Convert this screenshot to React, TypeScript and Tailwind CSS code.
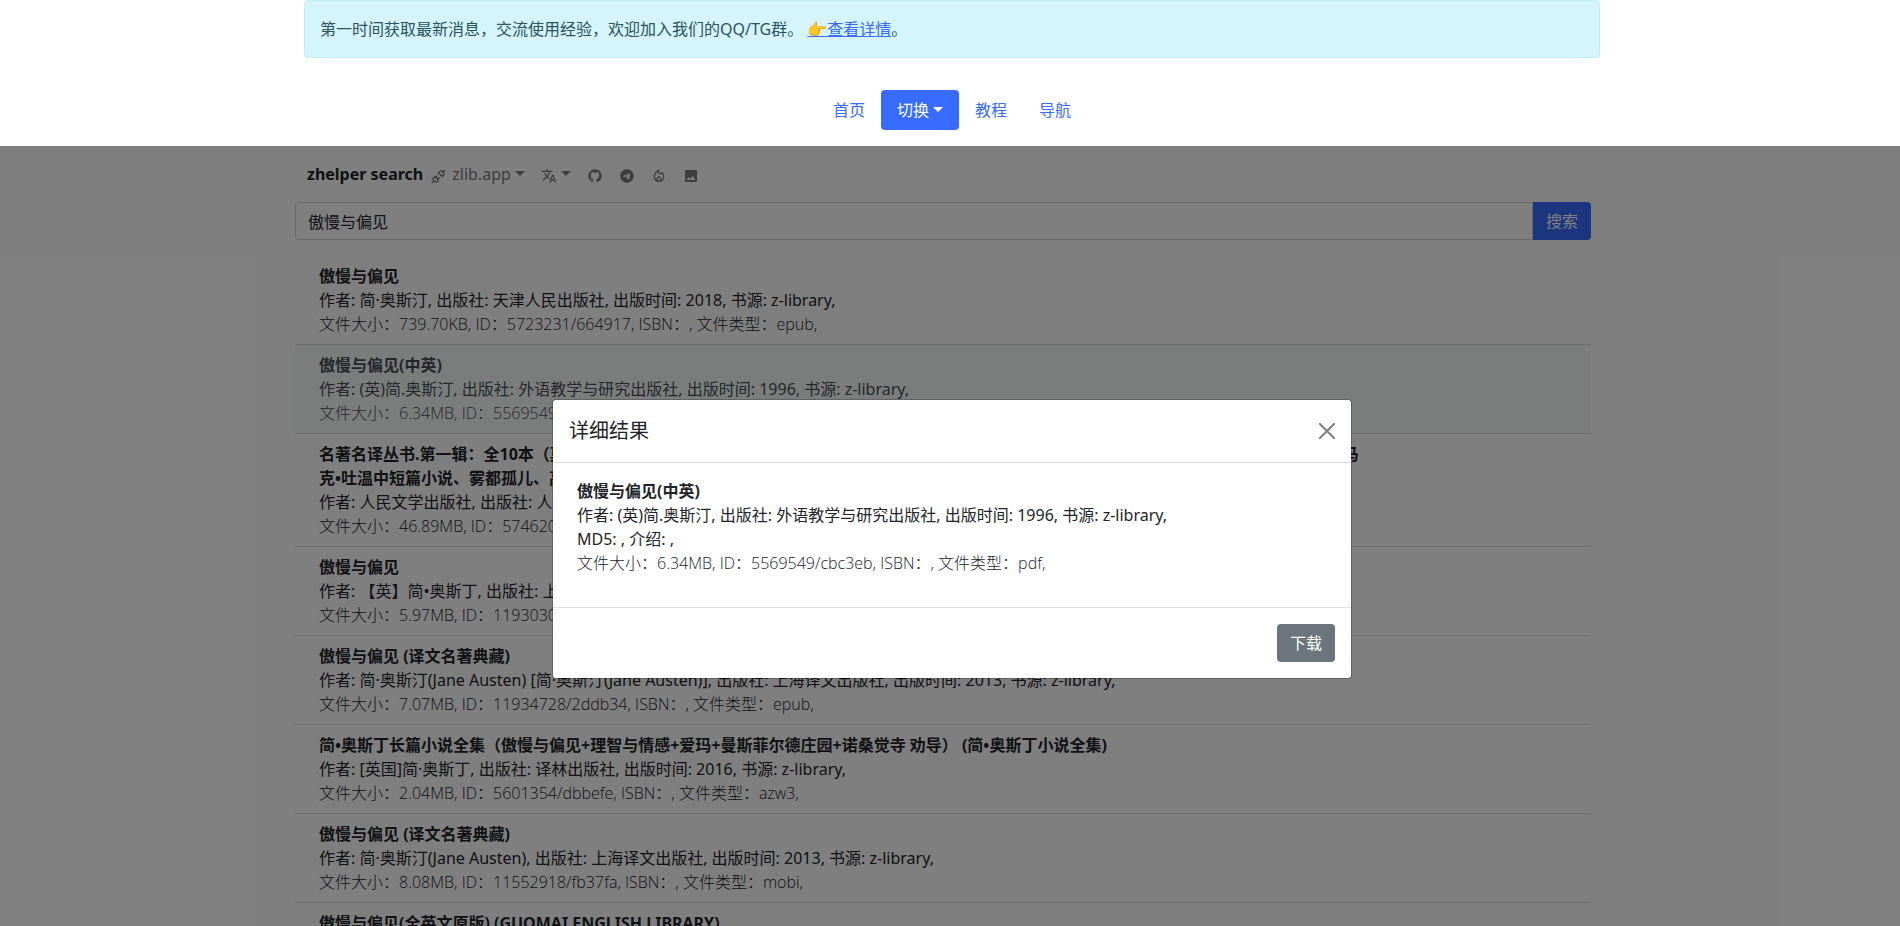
import React, { useState } from 'react';
import { Unplug } from 'lucide-react';
import { RiGithubFill, RiTelegramFill } from 'react-icons/ri';
import { MdTranslate, MdOutlineLocalFireDepartment, MdImage } from 'react-icons/md';

interface Book {
  id: string;
  title: string;
  author: string;
  publisher: string;
  year: string;
  size: string;
  type: string;
}

const books: Book[] = [
  { id: '5723231/664917', title: '傲慢与偏见', author: '简·奥斯汀', publisher: '天津人民出版社', year: '2018', size: '739.70KB', type: 'epub' },
  { id: '5569549/cbc3eb', title: '傲慢与偏见(中英)', author: '(英)简.奥斯汀', publisher: '外语教学与研究出版社', year: '1996', size: '6.34MB', type: 'pdf' },
  { id: '5746201/a41c0e', title: '名著名译丛书.第一辑：全10本（莫泊桑短篇小说、傲慢与偏见、简·爱、红与黑、安娜·卡列尼娜、巴黎圣母院、基督山伯爵、契诃夫短篇小说选、马克•吐温中短篇小说、雾都孤儿、高老头）', author: '人民文学出版社', publisher: '人民文学出版社', year: '2015', size: '46.89MB', type: 'epub' },
  { id: '11930304/5e2d1b', title: '傲慢与偏见', author: '【英】简•奥斯丁', publisher: '上海译文出版社', year: '2010', size: '5.97MB', type: 'epub' },
  { id: '11934728/2ddb34', title: '傲慢与偏见 (译文名著典藏)', author: '简·奥斯汀(Jane Austen) [简·奥斯汀(Jane Austen)]', publisher: '上海译文出版社', year: '2013', size: '7.07MB', type: 'epub' },
  { id: '5601354/dbbefe', title: '简•奥斯丁长篇小说全集（傲慢与偏见+理智与情感+爱玛+曼斯菲尔德庄园+诺桑觉寺 劝导） (简•奥斯丁小说全集)', author: '[英国]简·奥斯丁', publisher: '译林出版社', year: '2016', size: '2.04MB', type: 'azw3' },
  { id: '11552918/fb37fa', title: '傲慢与偏见 (译文名著典藏)', author: '简·奥斯汀(Jane Austen)', publisher: '上海译文出版社', year: '2013', size: '8.08MB', type: 'mobi' },
  { id: '11560217/9c01de', title: '傲慢与偏见(全英文原版) (GUOMAI ENGLISH LIBRARY)', author: '简·奥斯汀', publisher: '果麦文化', year: '2017', size: '1.26MB', type: 'epub' },
];

const Caret = () => (
  <span className="ml-1 inline-block border-x-[5px] border-t-[5px] border-x-transparent border-t-current align-[4px]" />
);

const BookInfo: React.FC<{ book: Book; detailed?: boolean }> = ({ book, detailed }) => (
  <>
    <div className="font-bold">{book.title}</div>
    <div>
      作者: {book.author}, 出版社: {book.publisher}, 出版时间: {book.year}, 书源: z-library,
    </div>
    {detailed && <div>MD5: , 介绍: ,</div>}
    <div className="font-['Open_Sans','Noto_Sans_CJK_SC',sans-serif] font-light">
      文件大小：{book.size}, ID：{book.id}, ISBN：, 文件类型：{book.type},
    </div>
  </>
);

const Notice = () => (
  <div className="mx-auto mb-4 w-full max-w-[1296px] rounded border border-[#bfeffa] bg-[#d5f4fb] p-4 pl-[15px] text-[#2a545e]">
    第一时间获取最新消息，交流使用经验，欢迎加入我们的QQ/TG群。{' '}
    <a href="#group" className="text-[#386bff] underline">👉查看详情</a>。
  </div>
);

const TopNav = () => (
  <nav className="flex justify-center py-4 text-[#386bff]">
    <a href="#home" className="px-4 py-2">首页</a>
    <button type="button" className="rounded bg-[#386bff] px-4 py-2 text-white">
      切换<Caret />
    </button>
    <a href="#guide" className="px-4 py-2">教程</a>
    <a href="#links" className="px-4 py-2">导航</a>
  </nav>
);

const SiteBar = () => (
  <header className="flex h-14 items-center pl-3 text-[#7a7a7a]">
    <a href="#search" className="mr-2 font-bold text-[#212529]">zhelper search</a>
    <button type="button" className="mr-4 flex items-center gap-1.5">
      <Unplug size={15} strokeWidth={2} className="mt-1" />
      <span>zlib.app<Caret /></span>
    </button>
    <button type="button" aria-label="Language" className="mr-4 flex items-center">
      <MdTranslate size={16} className="mt-1" />
      <span><Caret /></span>
    </button>
    <div className="mt-1 flex gap-4">
      <a href="#github" aria-label="GitHub"><RiGithubFill size={16} /></a>
      <a href="#telegram" aria-label="Telegram"><RiTelegramFill size={16} /></a>
      <a href="#hot" aria-label="Hot"><MdOutlineLocalFireDepartment size={16} /></a>
      <a href="#images" aria-label="Images"><MdImage size={16} /></a>
    </div>
  </header>
);

const SearchBox = () => {
  const [query, setQuery] = useState('傲慢与偏见');

  return (
    <form className="flex" onSubmit={e => e.preventDefault()}>
      <input
        type="text"
        aria-label="搜索"
        value={query}
        onChange={e => setQuery(e.target.value)}
        className="h-[38px] min-w-0 flex-1 rounded-l border border-[#ced4da] bg-white px-3 text-[#212529] outline-none"
      />
      <button type="submit" className="h-[38px] rounded-r bg-[#386bff] px-[13px] text-white">搜索</button>
    </form>
  );
};

const DetailDialog: React.FC<{ book: Book; onClose: () => void }> = ({ book, onClose }) => (
  <div className="absolute inset-0 flex items-center justify-center bg-black/50 pt-1.5 pl-1">
    <div role="dialog" aria-modal="true" aria-labelledby="detail-title" className="w-full max-w-[800px] rounded border border-black/20 bg-white bg-clip-padding">
      <div className="flex items-center justify-between border-b border-[#dee2e6] p-4">
        <h5 id="detail-title" className="text-xl leading-[30px]">详细结果</h5>
        <button type="button" aria-label="Close" onClick={onClose} className="text-black/50">
          <svg width="16" height="16" viewBox="0 0 16 16" stroke="currentColor" strokeWidth="2">
            <path d="M0 0l16 16M16 0L0 16" />
          </svg>
        </button>
      </div>
      <div className="px-6 pt-4 pb-8">
        <BookInfo book={book} detailed />
      </div>
      <div className="flex justify-end border-t border-[#dee2e6] p-4">
        <button type="button" className="h-[38px] rounded bg-[#6c757d] px-[13px] text-white">下载</button>
      </div>
    </div>
  </div>
);

const App: React.FC = () => {
  const [selected, setSelected] = useState<Book | null>(books[1]);

  return (
    <div className="flex h-screen flex-col overflow-hidden bg-white font-['Noto_Sans','Noto_Sans_CJK_SC',sans-serif] text-base text-[#212529]">
      <div className="shrink-0 pl-1">
        <Notice />
        <TopNav />
      </div>
      <main className="relative min-h-0 flex-1 overflow-hidden pr-[14px]">
        <div className="mx-auto max-w-[1296px]">
          <SiteBar />
          <SearchBox />
          <ul className="mt-4">
            {books.map(book => (
              <li
                key={book.id}
                onClick={() => setSelected(book)}
                className={`cursor-pointer border-b border-[#dfdfdf] px-6 py-2 ${
                  book.id === selected?.id ? 'bg-[#f7fbf9] text-[#495057]' : ''
                }`}
              >
                <div className="max-w-[1044px]">
                  <BookInfo book={book} />
                </div>
              </li>
            ))}
          </ul>
        </div>
        {selected && <DetailDialog book={selected} onClose={() => setSelected(null)} />}
      </main>
    </div>
  );
};

export default App;
